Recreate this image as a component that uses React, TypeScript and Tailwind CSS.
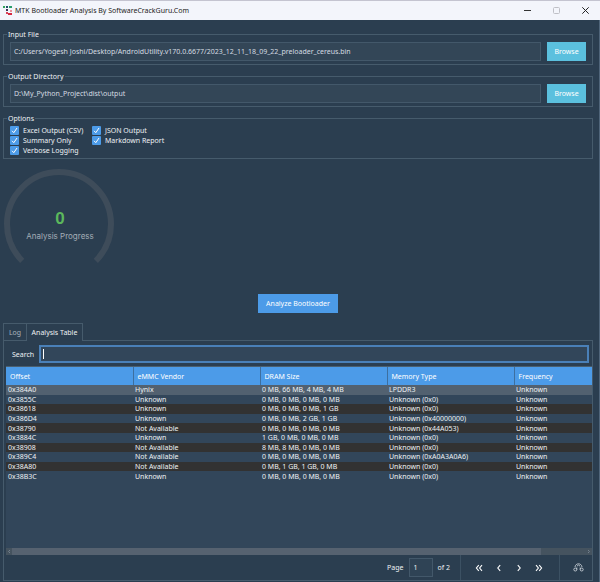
import React from "react";

const rows = [
  ["0x384A0", "Hynix", "0 MB, 66 MB, 4 MB, 4 MB", "LPDDR3", "Unknown"],
  ["0x3855C", "Unknown", "0 MB, 0 MB, 0 MB, 0 MB", "Unknown (0x0)", "Unknown"],
  ["0x38618", "Unknown", "0 MB, 0 MB, 0 MB, 1 GB", "Unknown (0x0)", "Unknown"],
  ["0x386D4", "Unknown", "0 MB, 0 MB, 2 GB, 1 GB", "Unknown (0x40000000)", "Unknown"],
  ["0x38790", "Not Available", "0 MB, 0 MB, 0 MB, 0 MB", "Unknown (0x44A053)", "Unknown"],
  ["0x3884C", "Unknown", "1 GB, 0 MB, 0 MB, 0 MB", "Unknown (0x0)", "Unknown"],
  ["0x38908", "Not Available", "8 MB, 8 MB, 0 MB, 0 MB", "Unknown (0x0)", "Unknown"],
  ["0x389C4", "Not Available", "0 MB, 0 MB, 0 MB, 0 MB", "Unknown (0xA0A3A0A6)", "Unknown"],
  ["0x38A80", "Not Available", "0 MB, 1 GB, 1 GB, 0 MB", "Unknown (0x0)", "Unknown"],
  ["0x38B3C", "Unknown", "0 MB, 0 MB, 0 MB, 0 MB", "Unknown (0x0)", "Unknown"],
];

const columns = ["Offset", "eMMC Vendor", "DRAM Size", "Memory Type", "Frequency"];

function TitleBar() {
  return (
    <header className="flex h-5 items-center border-t border-[#c4c4d0] bg-[#f3f5fb] pl-[3px] pr-2 text-[#1c1c22]">
      <svg className="mr-[3px] h-[9px] w-[9px]" viewBox="0 0 9 9" aria-hidden="true">
        <rect x="0" y="0" width="2" height="2" fill="#2fa35a" />
        <rect x="3" y="0" width="2" height="2" fill="#24506b" />
        <rect x="6" y="0" width="3" height="2" fill="#2a9d6b" />
        <rect x="3" y="3" width="2" height="2" fill="#3d3555" />
        <rect x="3" y="6" width="2" height="2" fill="#d8405a" />
        <rect x="7" y="4" width="2" height="2" fill="#e8909a" />
        <rect x="5" y="7" width="4" height="2" fill="#d8283f" />
      </svg>
      <h1 className="grow">MTK Bootloader Analysis By SoftwareCrackGuru.Com</h1>
      <div className="flex items-center gap-[15px]">
        <button aria-label="Minimize" className="flex w-[14px] justify-center">
          <svg width="7" height="7" viewBox="0 0 7 7"><path d="M0 3.5h7" stroke="#333" /></svg>
        </button>
        <button aria-label="Maximize" className="flex w-[14px] justify-center">
          <svg width="7" height="7" viewBox="0 0 7 7" fill="none"><rect x=".5" y=".5" width="6" height="6" rx="1" stroke="#bfc0c6" /></svg>
        </button>
        <button aria-label="Close" className="flex w-[14px] justify-center">
          <svg width="7" height="7" viewBox="0 0 7 7"><path d="M.3.3l6.4 6.4M6.7.3L.3 6.7" stroke="#222" /></svg>
        </button>
      </div>
    </header>
  );
}

function PathField({ id, label, value }: { id: string; label: string; value: string }) {
  return (
    <fieldset className="border border-[#465b6c] px-[6px] pb-[3px]">
      <legend className="-ml-[3px] h-[9px] px-px leading-[9px]">
        <label htmlFor={id}>{label}</label>
      </legend>
      <div className="flex gap-[6px] pt-[3px]">
        <input
          id={id}
          defaultValue={value}
          className="h-[19px] min-w-0 grow border border-[#43586a] bg-[#334657] px-[3px] text-[#d5dce2] outline-none"
        />
        <button className="h-[19px] w-[39px] bg-[#5bc0de] text-white">Browse</button>
      </div>
    </fieldset>
  );
}

function Check({ label }: { label: string }) {
  return (
    <label className="flex items-center gap-1">
      <span className="grid h-[9px] w-[9px]">
        <input type="checkbox" defaultChecked className="col-start-1 row-start-1 h-[9px] w-[9px] appearance-none rounded-[1px] bg-[#4c9be8]" />
        <svg className="pointer-events-none col-start-1 row-start-1" viewBox="0 0 9 9" fill="none">
          <path d="M2 4.8l1.8 1.9L7 2" stroke="#fff" />
        </svg>
      </span>
      {label}
    </label>
  );
}

function Gauge() {
  return (
    <div className="grid h-[110px] w-[110px]">
      <svg className="col-start-1 row-start-1" viewBox="0 0 110 110" fill="none" aria-hidden="true">
        <path d="M18.2 91.8a52 52 0 1 1 73.6 0" stroke="#3e4c5a" strokeWidth="6" />
      </svg>
      <div className="col-start-1 row-start-1 flex flex-col items-center pl-[2px] pt-[40px]">
        <strong className="font-['Liberation_Sans',Arial,sans-serif] text-[17px] leading-5 text-[#5cb85c]">0</strong>
        <span className="font-['Inter','Liberation_Sans',sans-serif] text-[8px] leading-[14px] text-[#a3adb6]">Analysis Progress</span>
      </div>
    </div>
  );
}

function ResultsTable() {
  return (
    <table className="h-[114px] w-full table-fixed border-collapse text-left">
      <colgroup>
        <col className="w-[127px]" />
        <col className="w-[127px]" />
        <col className="w-[127px]" />
        <col className="w-[127px]" />
        <col />
      </colgroup>
      <thead>
        <tr className="h-[18px] bg-[#4c9be8] text-white">
          {columns.map((c) => (
            <th key={c} className="border-r border-[#3d6f9f] px-1 py-0 font-normal last:border-r-0">{c}</th>
          ))}
        </tr>
      </thead>
      <tbody>
        {rows.map((r, i) => (
          <tr key={r[0]} className={i === 0 ? "bg-[#526170]" : i % 2 ? "bg-[#32465a]" : "bg-[#323232]"}>
            {r.map((c, j) => (
              <td key={j} className="px-[2px] py-0 leading-[9px]">{c}</td>
            ))}
          </tr>
        ))}
      </tbody>
    </table>
  );
}

function NavButton({ label, path }: { label: string; path: string }) {
  return (
    <button className="flex h-5 w-5 items-center justify-center" aria-label={label}>
      <svg width="8" height="8" viewBox="0 0 8 8" fill="none" stroke="#fff" strokeWidth="1.1">
        <path d={path} />
      </svg>
    </button>
  );
}

function Pager() {
  return (
    <nav className="flex h-[25px] items-center justify-end" aria-label="Pages">
      <label htmlFor="page" className="mr-[5px]">Page</label>
      <input id="page" defaultValue="1" className="h-[19px] w-6 border border-[#43586a] bg-[#2f4355] px-1 outline-none" />
      <span className="ml-[5px] mr-[10px]">of 2</span>
      <div className="flex h-full items-center border-l border-[#3c5163] pl-2 pr-[10px]">
        <NavButton label="First page" path="M3.8 1.2L1.4 4l2.4 2.8M7 1.2L4.6 4 7 6.8" />
        <NavButton label="Previous page" path="M5.2 1.2L2.8 4l2.4 2.8" />
        <NavButton label="Next page" path="M2.8 1.2L5.2 4 2.8 6.8" />
        <NavButton label="Last page" path="M1 1.2L3.4 4 1 6.8M4.2 1.2L6.6 4 4.2 6.8" />
      </div>
      <div className="flex h-full items-center border-l border-[#3c5163] pl-2 pr-1">
        <button className="flex h-5 w-5 items-center justify-center" aria-label="Reset table">
          <svg width="11" height="9" viewBox="0 0 11 9" fill="none" stroke="#d5dce2" strokeWidth=".8">
            <circle cx="2.3" cy="6.5" r="1.5" />
            <circle cx="8.7" cy="6.5" r="1.5" />
            <path d="M3.8 6.5V4.5M7.2 6.5V4.5M2 4C2.3 2 3.7.8 5.5.8S8.7 2 9 4M3.9 3.2L5.5 2l1.6 1.2" />
          </svg>
        </button>
      </div>
    </nav>
  );
}

export default function App() {
  return (
    <div className="flex min-h-screen flex-col bg-[#2b3e50] font-['Noto_Sans','Open_Sans',sans-serif] text-[7px] leading-[9px] text-[#eef1f4]">
      <TitleBar />
      <main className="flex grow flex-col border-r border-[#50657a] pb-px pl-[3px] pr-[6px] pt-[10px]">
        <div className="flex flex-col gap-[7px]">
          <PathField id="input-file" label="Input File" value="C:/Users/Yogesh Joshi/Desktop/AndroidUtility.v170.0.6677/2023_12_11_18_09_22_preloader_cereus.bin" />
          <PathField id="output-dir" label="Output Directory" value="D:\My_Python_Project\dist\output" />
          <fieldset className="border border-[#465b6c] px-[6px] pb-[3px]">
            <legend className="-ml-[3px] h-[9px] px-px leading-[9px]">Options</legend>
            <div className="flex gap-[6px] pt-[3px]">
              <div className="flex w-[76px] flex-col gap-px">
                <Check label="Excel Output (CSV)" />
                <Check label="Summary Only" />
                <Check label="Verbose Logging" />
              </div>
              <div className="flex flex-col gap-px">
                <Check label="JSON Output" />
                <Check label="Markdown Report" />
              </div>
            </div>
          </fieldset>
        </div>
        <div className="pl-px pt-[10px]">
          <Gauge />
        </div>
        <button className="mt-[15px] h-[19px] w-20 self-center bg-[#4c9be8] text-white">Analyze Bootloader</button>
        <div className="mt-[10px] flex items-end" role="tablist">
          <button role="tab" aria-selected="false" className="h-[18px] w-[23px] border border-r-0 border-[#465b6c] text-[#aab4bd]">Log</button>
          <button role="tab" aria-selected="true" className="h-[18px] w-[57px] border border-b-0 border-[#465b6c]">Analysis Table</button>
          <div className="h-px grow bg-[#465b6c]" />
        </div>
        <section className="flex grow flex-col border-x border-b border-[#465b6c] pl-[2px]">
          <div className="flex items-center pb-[3px] pl-[6px] pr-[3px] pt-1">
            <label htmlFor="search" className="w-[27px]">Search</label>
            <div className="flex h-[18px] min-w-0 grow items-center border-2 border-[#4a80b8] bg-[#32465a] pl-[2px]">
              <span className="h-[10px] w-px bg-white" />
              <input id="search" className="h-full min-w-0 grow bg-transparent outline-none" />
            </div>
          </div>
          <div className="flex grow flex-col border-t border-[#4a5f70] bg-[#32465a]">
            <ResultsTable />
          </div>
          <div className="flex h-[7px] items-center justify-between bg-[#45535f]">
            <svg width="6" height="7" viewBox="0 0 6 7" fill="none" stroke="#74808c"><path d="M4 2L2.5 3.5 4 5" /></svg>
            <div className="mr-[45px] h-full grow bg-[#566270]" />
            <svg width="6" height="7" viewBox="0 0 6 7" fill="none" stroke="#74808c"><path d="M2 2l1.5 1.5L2 5" /></svg>
          </div>
          <Pager />
        </section>
      </main>
    </div>
  );
}
